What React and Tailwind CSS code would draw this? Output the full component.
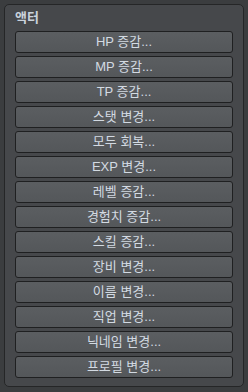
import React from "react";

const items = [
  "HP 증감...",
  "MP 증감...",
  "TP 증감...",
  "스탯 변경...",
  "모두 회복...",
  "EXP 변경...",
  "레벨 증감...",
  "경험치 증감...",
  "스킬 증감...",
  "장비 변경...",
  "이름 변경...",
  "직업 변경...",
  "닉네임 변경...",
  "프로필 변경...",
];

export default function App() {
  return (
    <div
      className="w-[248px] h-[392px] bg-[#3b3d3f] p-[4px] pb-[5px]"
      style={{ fontFamily: '"Liberation Sans", "Noto Sans CJK KR", sans-serif' }}
    >
      <div className="h-full rounded-[5px] border border-[#252627] bg-[#46484b] pl-[10px] pr-[9px] pt-[5px]">
        <div className="text-[13px] leading-[15px] font-semibold text-[#c9d2dc] h-[21px]">액터</div>
        <div className="flex flex-col gap-[3px]">
          {items.map((t) => (
            <button
              key={t}
              className="h-[22px] w-[218px] rounded-[3px] border border-[#1f2021] bg-gradient-to-b from-[#5b5e61] to-[#54575a] text-[13px] leading-[20px] text-[#d3dae2] text-center"
            >
              {t}
            </button>
          ))}
        </div>
      </div>
    </div>
  );
}
